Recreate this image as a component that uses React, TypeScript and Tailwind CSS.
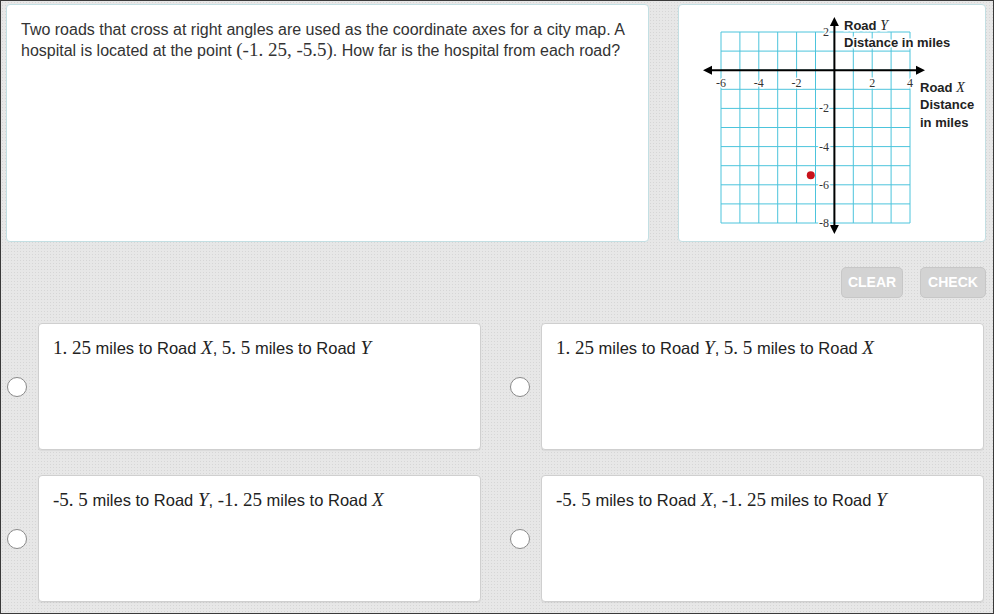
import React from "react"

const SANS = "font-['Liberation_Sans',Arial,sans-serif]"

function M({ children, italic }: { children: React.ReactNode; italic?: boolean }) {
  return (
    <span className={`font-['Liberation_Serif','Times_New_Roman',serif] text-[19px] leading-none ${italic ? "italic" : ""}`}>
      {children}
    </span>
  )
}

function Graph() {
  const x0 = 42
  const y0 = 27
  const cw = 18.9
  const ch = 19.1
  const ox = x0 + 6 * cw
  const oy = y0 + 2 * ch
  const cols = Array.from({ length: 11 }, (_, i) => x0 + i * cw)
  const rows = Array.from({ length: 11 }, (_, i) => y0 + i * ch)
  const xl = [-6, -4, -2, 2, 4]
  const yl = [-2, -4, -6, -8]
  const lbl = { fontFamily: "'Liberation Serif', serif", fontSize: 12, fill: "#333" }
  const bold = { fontFamily: "'Liberation Sans', Arial, sans-serif", fontSize: 13, fontWeight: 700, fill: "#222" }
  return (
    <svg width="306" height="235" viewBox="0 0 306 235">
      {cols.map((x) => (
        <line key={"c" + x} x1={x} x2={x} y1={y0} y2={y0 + 10 * ch} stroke="#4cc4dc" strokeWidth="1" />
      ))}
      {rows.map((y) => (
        <line key={"r" + y} y1={y} y2={y} x1={x0} x2={x0 + 10 * cw} stroke="#4cc4dc" strokeWidth="1" />
      ))}
      {/* axes */}
      <line x1={30} x2={240} y1={oy} y2={oy} stroke="#000" strokeWidth="2" />
      <polygon points={`24,${oy} 33,${oy - 4.5} 33,${oy + 4.5}`} fill="#000" />
      <polygon points={`246,${oy} 237,${oy - 4.5} 237,${oy + 4.5}`} fill="#000" />
      <line x1={ox} x2={ox} y1={18} y2={224} stroke="#000" strokeWidth="2" />
      <polygon points={`${ox},12 ${ox - 4.5},21 ${ox + 4.5},21`} fill="#000" />
      <polygon points={`${ox},229 ${ox - 4.5},220 ${ox + 4.5},220`} fill="#000" />
      {xl.map((v) => (
        <text key={"x" + v} x={ox + v * cw} y={82} textAnchor="middle" {...lbl} stroke="#fff" strokeWidth="3" paintOrder="stroke">
          {v}
        </text>
      ))}
      <text x={150} y={31} textAnchor="end" {...lbl} stroke="#fff" strokeWidth="3" paintOrder="stroke">2</text>
      {yl.map((v) => (
        <text key={"y" + v} x={150} y={oy - v * ch + 4} textAnchor="end" {...lbl} stroke="#fff" strokeWidth="3" paintOrder="stroke">
          {v}
        </text>
      ))}
      <circle cx={ox - 1.25 * cw} cy={oy + 5.5 * ch} r="4" fill="#c8121b" />
      <g stroke="#fff" strokeWidth="3" paintOrder="stroke">
        <text x={165} y={25} {...bold}>
          Road <tspan fontFamily="'Liberation Serif', serif" fontStyle="italic" fontWeight="400" fontSize="14">Y</tspan>
        </text>
        <text x={165} y={42} {...bold}>Distance in miles</text>
        <text x={241} y={87} {...bold}>
          Road <tspan fontFamily="'Liberation Serif', serif" fontStyle="italic" fontWeight="400" fontSize="14">X</tspan>
        </text>
        <text x={241} y={104} {...bold}>Distance</text>
        <text x={241} y={122} {...bold}>in miles</text>
      </g>
    </svg>
  )
}

function Answer({ children }: { children: React.ReactNode }) {
  return (
    <div className="flex items-center gap-[11px]">
      <div className="w-[20px] h-[20px] rounded-full border border-[#8a8a8a] bg-white shrink-0" />
      <div className="w-[443px] h-[127px] bg-white border border-[#cfcfcf] rounded-[4px] pl-[14px] pt-[13px] text-[16.5px] leading-[22px] text-[#222] shadow-[0_1px_1px_rgba(0,0,0,0.06)]">
        {children}
      </div>
    </div>
  )
}

export default function App() {
  return (
    <div
      className={`w-[994px] h-[614px] border border-[#3a3a3a] bg-[#e7e7e7] bg-[image:radial-gradient(#d6d6d6_0.8px,transparent_0.8px)] bg-[size:3px_3px] ${SANS} text-[#333] pt-[3px] pl-[5px] pr-[7px] overflow-hidden`}
    >
      <div className="flex gap-[29px]">
        <div className="w-[644px] h-[238px] bg-white border border-[#c3dfe3] rounded-[4px] pl-[14px] pr-[8px] pt-[14px] text-[16px] leading-[21px] text-[#333]">
          Two roads that cross at right angles are used as the coordinate axes for a city map. A
          <br />
          hospital is located at the point <M>(-1. 25, -5.5)</M>. How far is the hospital from each road?
        </div>
        <div className="w-[308px] h-[238px] bg-white border border-[#c3dfe3] rounded-[4px]">
          <Graph />
        </div>
      </div>

      <div className="flex justify-end gap-[17px] mt-[25px]">
        <button className="w-[62px] h-[31px] rounded-[5px] bg-[#d3d3d3] border border-[#c7c7c7] text-white font-bold text-[14px]">
          CLEAR
        </button>
        <button className="w-[66px] h-[31px] rounded-[5px] bg-[#d3d3d3] border border-[#c7c7c7] text-white font-bold text-[14px]">
          CHECK
        </button>
      </div>

      <div className="grid grid-cols-[474px_474px] gap-x-[29px] gap-y-[25px] mt-[25px] pl-[1px]">
        <Answer>
          <M>1. 25</M> miles to Road <M italic>X</M>, <M>5. 5</M> miles to Road <M italic>Y</M>
        </Answer>
        <Answer>
          <M>1. 25</M> miles to Road <M italic>Y</M>, <M>5. 5</M> miles to Road <M italic>X</M>
        </Answer>
        <Answer>
          <M>-5. 5</M> miles to Road <M italic>Y</M>, <M>-1. 25</M> miles to Road <M italic>X</M>
        </Answer>
        <Answer>
          <M>-5. 5</M> miles to Road <M italic>X</M>, <M>-1. 25</M> miles to Road <M italic>Y</M>
        </Answer>
      </div>
    </div>
  )
}
